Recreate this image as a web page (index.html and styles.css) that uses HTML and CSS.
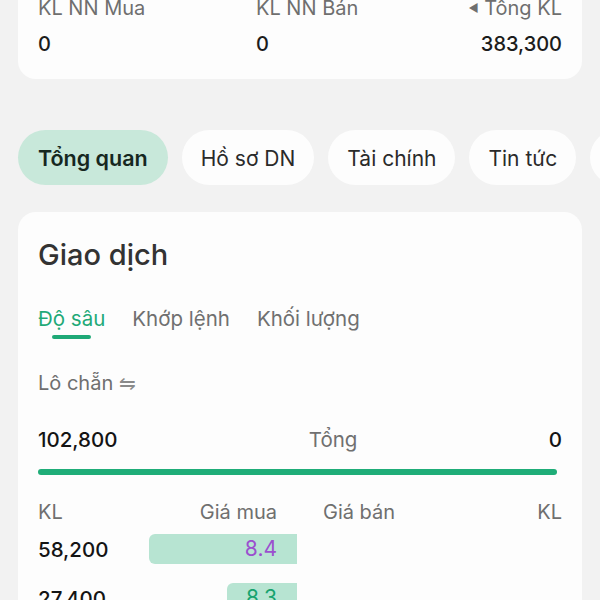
FILE: index.html
```html
<!DOCTYPE html>
<html lang="vi">
<head>
  <meta charset="UTF-8">
  <title>Giao dịch</title>
  <link rel="stylesheet" href="styles.css">
</head>
<body>

  <div class="card stats">
    <div class="stat first">
      <div class="label">KL NN Mua</div>
      <div class="value">0</div>
    </div>
    <div class="stat middle">
      <div class="label">KL NN Bán</div>
      <div class="value">0</div>
    </div>
    <div class="stat right">
      <div class="label"><span class="caret">&#9664;</span> Tổng KL</div>
      <div class="value">383,300</div>
    </div>
  </div>

  <div class="pills">
    <div class="pill active">Tổng quan</div>
    <div class="pill">Hồ sơ DN</div>
    <div class="pill">Tài chính</div>
    <div class="pill">Tin tức</div>
    <div class="pill">Sự kiện</div>
  </div>

  <div class="card trade">
    <h2>Giao dịch</h2>

    <div class="tabs">
      <div class="tab active">Độ sâu<span class="underline"></span></div>
      <div class="tab">Khớp lệnh</div>
      <div class="tab">Khối lượng</div>
    </div>

    <div class="lot">Lô chẵn <span class="swap">&#8651;</span></div>

    <div class="total">
      <span class="num">102,800</span>
      <span class="total-label">Tổng</span>
      <span class="num">0</span>
    </div>
    <div class="total-bar"></div>

    <div class="book head">
      <div class="side buy">
        <span>KL</span>
        <span class="price-head">Giá mua</span>
      </div>
      <div class="side sell">
        <span class="price-head">Giá bán</span>
        <span>KL</span>
      </div>
    </div>

    <div class="book row">
      <div class="side buy">
        <span class="num">58,200</span>
        <span class="price up-ceil" style="width: 148px">8.4</span>
      </div>
      <div class="side sell"></div>
    </div>

    <div class="book row">
      <div class="side buy">
        <span class="num">27,400</span>
        <span class="price up" style="width: 70px">8.3</span>
      </div>
      <div class="side sell"></div>
    </div>
  </div>

</body>
</html>
```

FILE: styles.css
```css
body {
  margin: 0;
  padding: 0 18px;
  background-color: #f2f2f2;
  font-family: Inter, "Noto Sans", sans-serif;
  color: #1c1c1c;
  overflow: hidden;
}

.card {
  background-color: #fdfdfd;
  border-radius: 18px;
}

/* top stats */
.stats {
  display: flex;
  margin-top: -24px;
  padding: 18px 20px 21px;
  white-space: nowrap;
}

.stat.first {
  width: 218px;
}

.stat.middle {
  flex: 1;
}

.stat.right {
  text-align: right;
}

.label {
  font-size: 20px;
  line-height: 28px;
  color: #6f6f6f;
}

.caret {
  font-size: 11px;
  vertical-align: 3px;
}

.value {
  font-size: 20px;
  font-weight: 500;
  line-height: 28px;
  margin-top: 8px;
}

/* section pills */
.pills {
  display: flex;
  gap: 14px;
  margin-top: 51px;
  white-space: nowrap;
}

.pill {
  flex-shrink: 0;
  height: 55px;
  line-height: 57px;
  padding: 0 19px;
  border-radius: 28px;
  background-color: #fdfdfd;
  font-size: 21px;
  color: #2a2a2a;
}

.pill.active {
  padding: 0 20px;
  background-color: #c8e8da;
  font-size: 21.5px;
  font-weight: 600;
  color: #16271f;
}

/* trade card */
.trade {
  margin-top: 27px;
  padding: 25px 20px 40px;
}

h2 {
  margin: 0;
  font-size: 29px;
  font-weight: 500;
  line-height: 36px;
  color: #333;
}

.tabs {
  display: flex;
  gap: 27px;
  margin-top: 32px;
}

.tab {
  font-size: 20.5px;
  line-height: 28px;
  color: #707070;
}

.tab.active {
  color: #1fa977;
}

.underline {
  display: block;
  width: 39px;
  height: 4px;
  margin: 2px auto 0;
  border-radius: 2px;
  background-color: #1fa977;
}

.lot {
  margin-top: 30px;
  font-size: 20px;
  line-height: 28px;
  color: #6f6f6f;
}

.swap {
  font-size: 20px;
  color: #8a8a8a;
}

.total {
  display: flex;
  justify-content: space-between;
  margin-top: 29px;
  line-height: 28px;
}

.num {
  font-size: 20.5px;
  font-weight: 500;
  color: #141414;
}

.total-label {
  font-size: 20.5px;
  color: #707070;
}

.total-bar {
  height: 6px;
  margin: 15px 5px 0 0;
  border-radius: 3px;
  background-color: #1fad78;
}

/* order book */
.book {
  display: flex;
  gap: 6px;
}

.side {
  flex: 1;
  display: flex;
  justify-content: space-between;
  align-items: center;
}

.book.head {
  margin-top: 23px;
  line-height: 28px;
  font-size: 20px;
  color: #6f6f6f;
}

.head .buy .price-head {
  padding-right: 20px;
}

.head .sell .price-head {
  padding-left: 20px;
}

.book.row {
  height: 30px;
  margin-top: 8px;
}

.book.row + .book.row {
  margin-top: 19px;
}

.price {
  box-sizing: border-box;
  height: 30px;
  line-height: 30px;
  padding-right: 20px;
  text-align: right;
  border-radius: 6px 0 0 6px;
  background-color: #b7e4d2;
  font-size: 21px;
}

.up-ceil {
  color: #9b4fcf;
}

.up {
  color: #16a36e;
}
```
